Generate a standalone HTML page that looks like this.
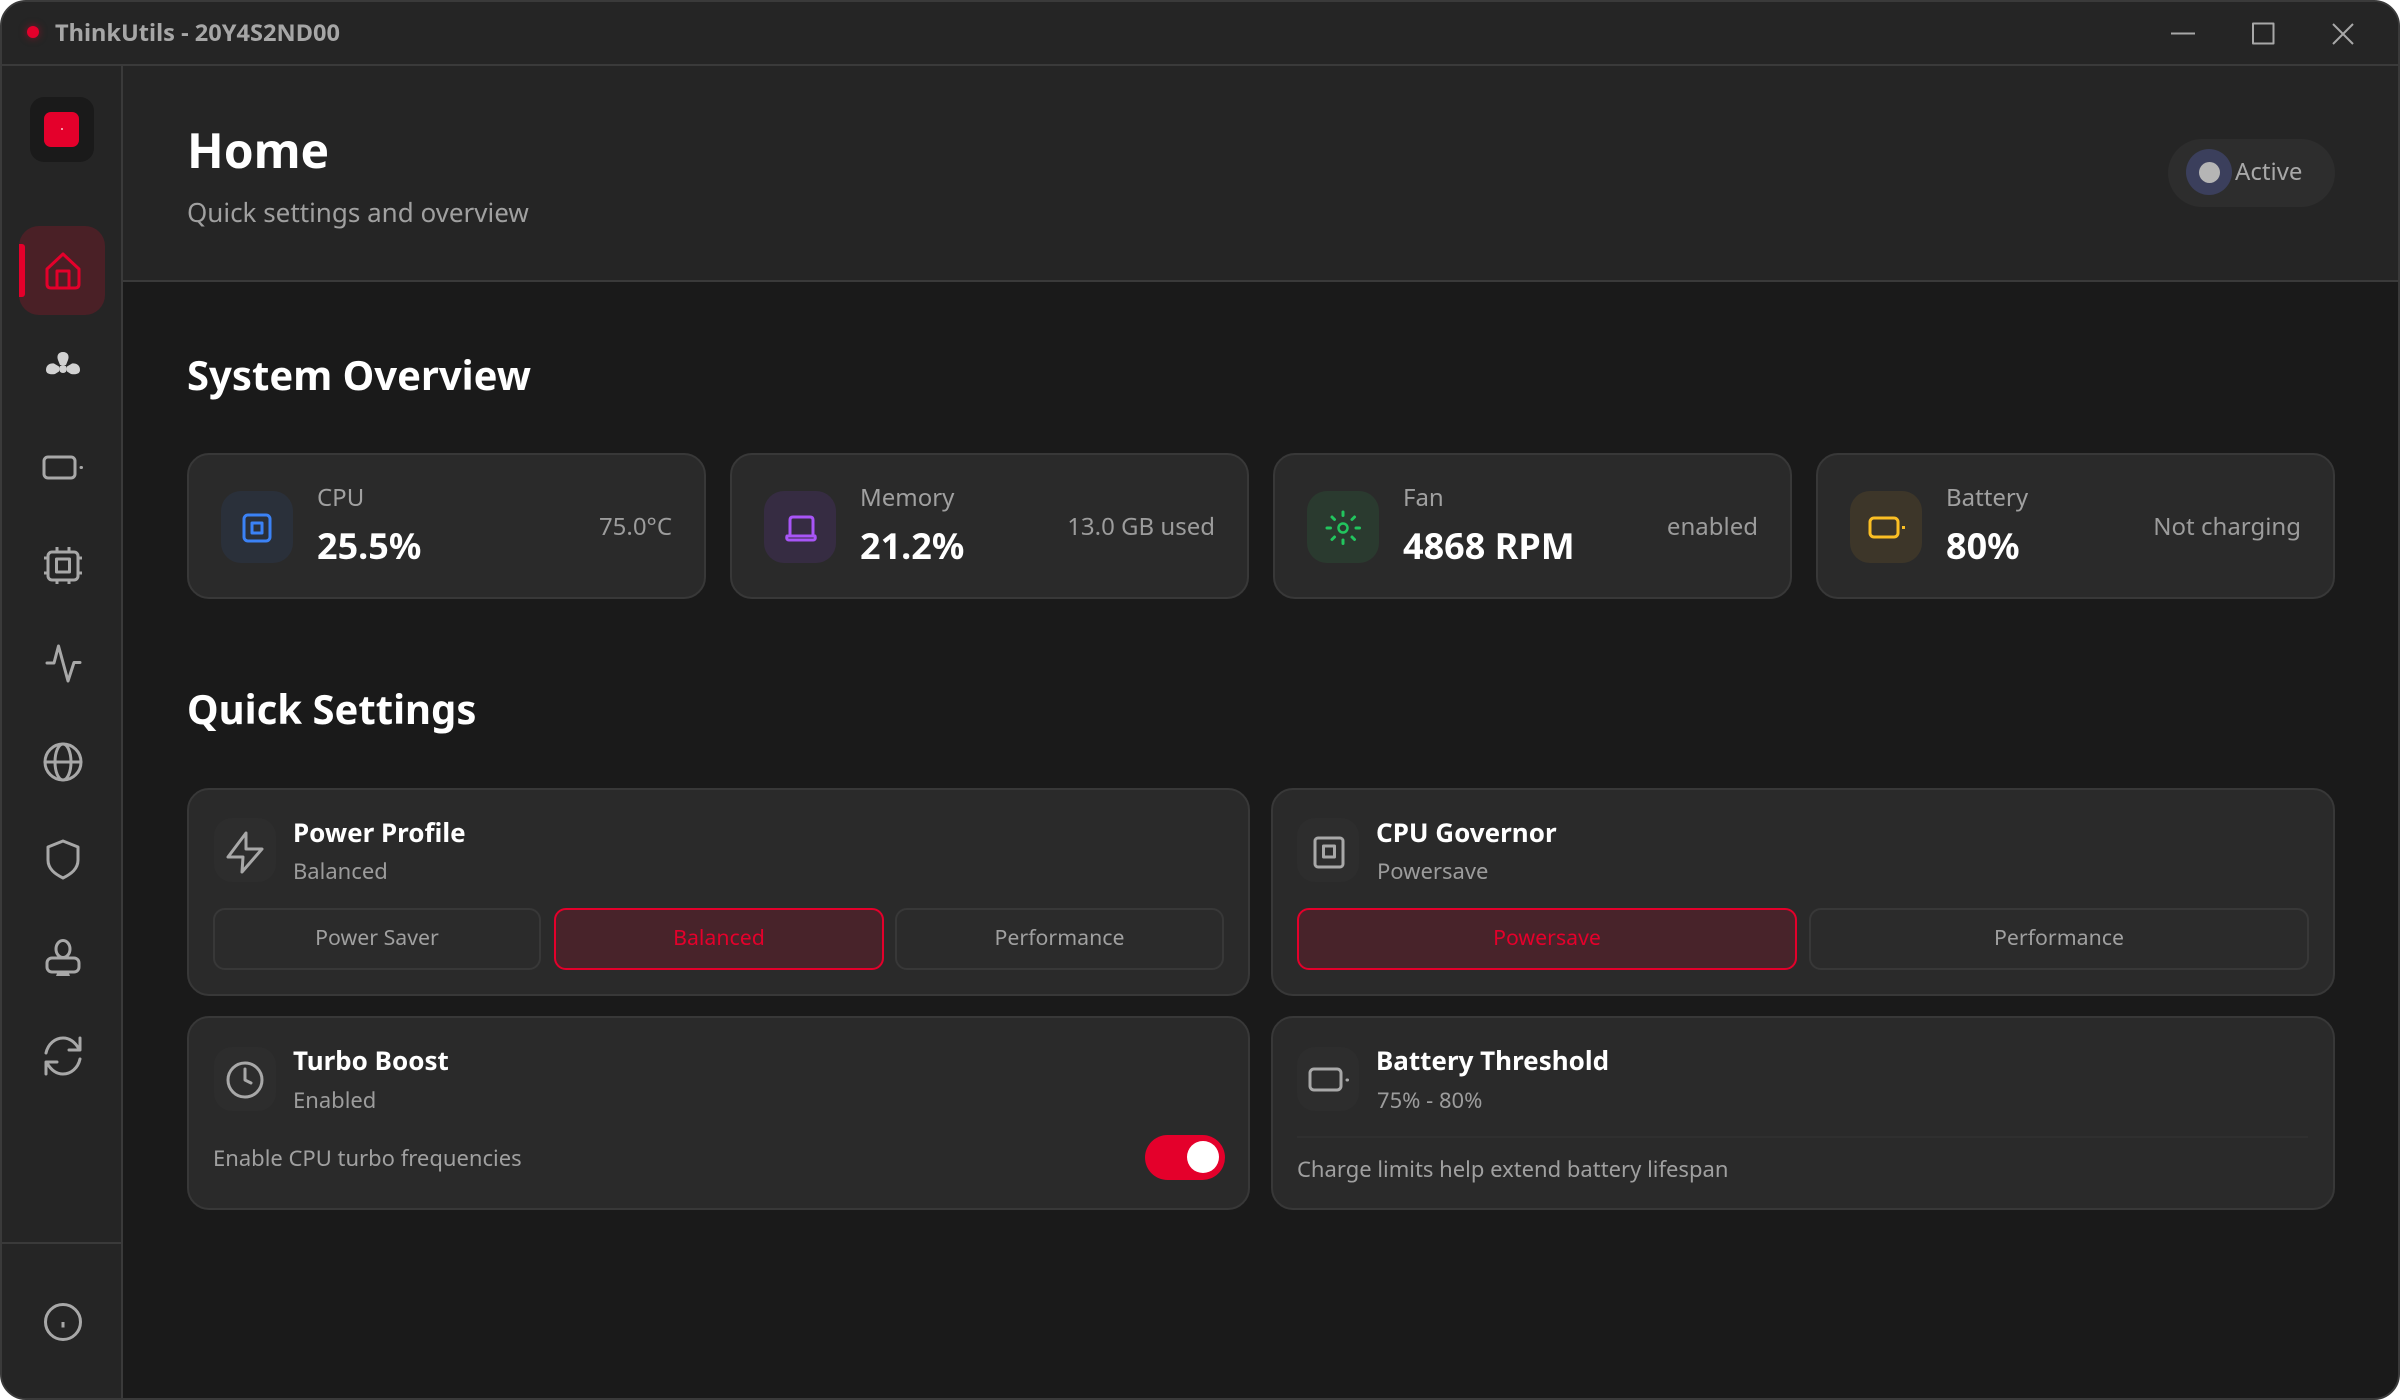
<!DOCTYPE html>
<html><head><meta charset="utf-8"><style>
*{margin:0;padding:0;box-sizing:border-box}
html,body{width:2400px;height:1400px;overflow:hidden;background:#fff}
body{font-family:"Noto Sans","Noto Sans CJK SC","Liberation Sans",sans-serif;position:relative}
.a{position:absolute}
.t{position:absolute;white-space:nowrap;line-height:40px;height:40px}
.card{position:absolute;background:#2a2a2a;border:2px solid #383838;border-radius:22px}
.ib{position:absolute;width:72px;height:72px;border-radius:20px}
.qb{position:absolute;width:62px;height:64px;border-radius:18px;background:#2d2d2d}
.btn{position:absolute;top:908px;height:62px;line-height:56px;text-align:center;border:2px solid #383838;border-radius:12px;font-size:21.3px;color:#a0a0a0;background:#2b2b2b}
.btn.on{background:#48232a;border-color:#e4002b;color:#e4002b}
.lab{font-size:24px;color:#a0a0a0}
.val{font-size:36px;font-weight:700;color:#fff}
.rt{font-size:24px;color:#9c9c9c;text-align:right}
.qt{font-size:26px;font-weight:700;color:#fff}
.qs{font-size:22px;color:#9c9c9c}
.h2{font-size:40px;font-weight:700;color:#fff}
</style></head><body>
<div class="a" style="left:0;top:0;width:2400px;height:1400px;border-radius:26px;background:#1a1a1a;border:2px solid #3a3a3a;overflow:hidden"></div>
<div class="a" style="left:2px;top:2px;width:2396px;height:63px;background:#252525;border-radius:24px 24px 0 0"></div>
<div class="a" style="left:2px;top:64px;width:2396px;height:2px;background:#3a3a3a"></div>
<div class="a" style="left:2px;top:66px;width:120px;height:1332px;background:#252525;border-radius:0 0 0 24px"></div>
<div class="a" style="left:121px;top:66px;width:2px;height:1332px;background:#3a3a3a"></div>
<div class="a" style="left:2px;top:1242px;width:119px;height:2px;background:#3a3a3a"></div>
<div class="a" style="left:123px;top:66px;width:2275px;height:214px;background:#252525"></div>
<div class="a" style="left:123px;top:280px;width:2275px;height:2px;background:#3a3a3a"></div>

<div class="a" style="left:27px;top:26px;width:12px;height:12px;border-radius:50%;background:#e4002b;box-shadow:0 0 8px rgba(228,0,43,.5)"></div>
<div class="t" style="left:55px;top:12px;font-size:23.6px;font-weight:700;color:#a6a6a6">ThinkUtils - 20Y4S2ND00</div>

<div class="a" style="left:30px;top:97px;width:64px;height:65px;border-radius:14px;background:#1a1a1a"></div>
<div class="a" style="left:44px;top:112px;width:35px;height:35px;border-radius:7px;background:#e4002b"></div>
<div class="a" style="left:61px;top:128px;width:2px;height:2px;background:#f59aa8"></div>
<div class="a" style="left:19px;top:226px;width:86px;height:89px;border-radius:20px;background:#4a2026"></div>
<div class="a" style="left:19px;top:244px;width:6px;height:53px;border-radius:0 3px 3px 0;background:#e4002b"></div>

<div class="t" style="left:187px;top:130.500px;font-size:48px;font-weight:700;color:#fff">Home</div>
<div class="t" style="left:187px;top:192px;font-size:26px;color:#a0a0a0">Quick settings and overview</div>
<div class="a" style="left:2168px;top:139px;width:167px;height:68px;border-radius:34px;background:#2d2d2d"></div>
<div class="a" style="left:2186px;top:149px;width:46px;height:46px;border-radius:50%;background:#3b3f5c"></div>
<div class="a" style="left:2199px;top:162px;width:21px;height:21px;border-radius:50%;background:#b5b5b5"></div>
<div class="t" style="left:2235px;top:152px;font-size:24px;color:#a8a8a8">Active</div>

<div class="t h2" style="left:187px;top:355px">System Overview</div>

<div class="card" style="left:187px;top:453px;width:519px;height:146px"></div>
<div class="card" style="left:730px;top:453px;width:519px;height:146px"></div>
<div class="card" style="left:1273px;top:453px;width:519px;height:146px"></div>
<div class="card" style="left:1816px;top:453px;width:519px;height:146px"></div>
<div class="ib" style="left:221px;top:491px;background:#2a303a"></div>
<div class="ib" style="left:764px;top:491px;background:#362c42"></div>
<div class="ib" style="left:1307px;top:491px;background:#2a3a2f"></div>
<div class="ib" style="left:1850px;top:491px;background:#3d3629"></div>

<div class="t lab" style="left:317px;top:478px">CPU</div>
<div class="t val" style="left:317px;top:526px">25.5%</div>
<div class="t rt" style="right:1728px;top:507px">75.0°C</div>
<div class="t lab" style="left:860px;top:478px">Memory</div>
<div class="t val" style="left:860px;top:526px">21.2%</div>
<div class="t rt" style="right:1185px;top:507px">13.0 GB used</div>
<div class="t lab" style="left:1403px;top:478px">Fan</div>
<div class="t val" style="left:1403px;top:526px">4868 RPM</div>
<div class="t rt" style="right:642px;top:507px">enabled</div>
<div class="t lab" style="left:1946px;top:478px">Battery</div>
<div class="t val" style="left:1946px;top:526px">80%</div>
<div class="t rt" style="right:99px;top:507px">Not charging</div>

<div class="t h2" style="left:187px;top:689px">Quick Settings</div>

<div class="card" style="left:187px;top:788px;width:1063px;height:208px"></div>
<div class="card" style="left:1271px;top:788px;width:1064px;height:208px"></div>
<div class="card" style="left:187px;top:1016px;width:1063px;height:194px"></div>
<div class="card" style="left:1271px;top:1016px;width:1064px;height:194px"></div>
<div class="qb" style="left:214px;top:818px"></div>
<div class="qb" style="left:1297px;top:818px"></div>
<div class="qb" style="left:214px;top:1047px"></div>
<div class="qb" style="left:1297px;top:1047px"></div>

<div class="t qt" style="left:293px;top:812px">Power Profile</div>
<div class="t qs" style="left:293px;top:851px">Balanced</div>
<div class="btn" style="left:213px;width:328px">Power Saver</div>
<div class="btn on" style="left:554px;width:330px">Balanced</div>
<div class="btn" style="left:895px;width:329px">Performance</div>

<div class="t qt" style="left:1376px;top:812px">CPU Governor</div>
<div class="t qs" style="left:1377px;top:851px">Powersave</div>
<div class="btn on" style="left:1297px;width:500px">Powersave</div>
<div class="btn" style="left:1809px;width:500px">Performance</div>

<div class="t qt" style="left:293px;top:1040px">Turbo Boost</div>
<div class="t qs" style="left:293px;top:1080px">Enabled</div>
<div class="t" style="left:213px;top:1138px;font-size:22px;color:#a0a0a0">Enable CPU turbo frequencies</div>
<div class="a" style="left:1145px;top:1135px;width:80px;height:45px;border-radius:23px;background:#e4002b"></div>
<div class="a" style="left:1187px;top:1141px;width:32px;height:32px;border-radius:50%;background:#fff"></div>

<div class="t qt" style="left:1376px;top:1040px">Battery Threshold</div>
<div class="t qs" style="left:1377px;top:1080px">75% - 80%</div>
<div class="a" style="left:1297px;top:1136px;width:1011px;height:2px;background:#2f2f2f"></div>
<div class="t" style="left:1297px;top:1149px;font-size:22px;color:#a0a0a0">Charge limits help extend battery lifespan</div>

<svg class="a" style="left:0;top:0" width="2400" height="1400" viewBox="0 0 2400 1400" fill="none" stroke-linecap="round" stroke-linejoin="round">
<g stroke="#a8a8a8" stroke-width="2" stroke-linecap="butt">
<path d="M2171 33.500H2195"/>
<rect x="2253" y="23.500" width="20.500" height="20"/>
<path d="M2333 24L2353 44M2353 24L2333 44"/>
</g>
<!-- home -->
<path d="M47 269L63 254L79 269V284Q79 288 75 288H51Q47 288 47 284ZM57 288V271H69V288" stroke="#e4002b" stroke-width="3"/>
<!-- fan -->
<g fill="#d2d2d2">
<path d="M63 352c-5 0-6.500 4-5 8l2 5h6l2-5c1.500-4 0-8-5-8z"/>
<path d="M46 370c0-5 4-7 8-6.500l5 3v5l-4 2.500c-5 1-9-.500-9-4z"/>
<path d="M80 370c0-5-4-7-8-6.500l-5 3v5l4 2.500c5 1 9-.500 9-4z"/>
<circle cx="63" cy="369" r="4"/>
</g>
<g stroke="#a8a8a8" stroke-width="3">
<rect x="44" y="457" width="31" height="21" rx="4"/>
<path d="M81 467.500h.5"/>
<!-- chip -->
<rect x="48" y="552" width="30" height="28" rx="4"/>
<rect x="56.500" y="559" width="13" height="13" stroke-linecap="butt"/>
<path d="M57 547v5M69 547v5M57 580v4M69 580v4M44 558h4M44 573h4M78 558h4M78 573h4" stroke-linecap="butt"/>
<!-- pulse -->
<path d="M47 663H54L58.500 646L68 681L74 662.500H80"/>
<!-- globe -->
<circle cx="63" cy="762" r="18"/>
<path d="M45 762H81"/>
<ellipse cx="63" cy="762" rx="8" ry="18"/>
<!-- shield -->
<path d="M63 841L78 847V860C78 869 71 874 63 878C55 874 48 869 48 860V847Z"/>
<!-- user -->
<ellipse cx="63" cy="949" rx="7" ry="8.500"/>
<rect x="47" y="958" width="32" height="14" rx="5"/>
<!-- refresh -->
<path d="M46 1053C48 1044 55 1038 63 1038C70 1038 75 1042 79 1049"/>
<path d="M80 1038V1050H69"/>
<path d="M80 1059C78 1068 71 1074 63 1074C56 1074 51 1070 47 1063"/>
<path d="M46 1074V1062H57"/>
<!-- info -->
<circle cx="63" cy="1322" r="17.500"/>
<path d="M63 1322v5.500" stroke-linecap="butt"/>
</g>
<path d="M58 971H68L70 976H56Z" fill="#a8a8a8"/>
<g stroke="#3b82f6" stroke-width="3"><rect x="244" y="515" width="26" height="26" rx="4"/><rect x="252" y="523" width="10" height="10" stroke-linecap="butt"/></g>
<g stroke="#a855f7" stroke-width="3"><path d="M790 536V520Q790 517 793 517H810Q813 517 813 520V536"/><path d="M787 536H815Q816 540 813 540H789Q786 540 787 536Z"/></g>
<g stroke="#22c55e"><circle cx="1343" cy="528" r="4.500" stroke-width="2.500"/>
<path d="M1343 512v3.500M1343 540v3.500M1327 528h3.500M1356 528h3.500M1332 517l2.500 2.500M1352 537l2.500 2.500M1354.500 517l-2.500 2.500M1334.500 537l-2.500 2.500" stroke-width="3"/></g>
<g stroke="#fbbf24" stroke-width="3"><rect x="1870" y="518" width="28" height="19" rx="4"/></g>
<rect x="1902" y="526" width="3" height="3" fill="#fbbf24"/>
<g stroke="#a8a8a8" stroke-width="3">
<path d="M246 833L228 857H243L242 872L262 849H246Z"/>
<rect x="1315" y="838" width="28" height="29" rx="3"/>
<rect x="1323.500" y="846" width="11" height="11"/>
<circle cx="245" cy="1080" r="17"/>
<path d="M245 1069V1080L251 1083"/>
<rect x="1310" y="1069" width="31" height="21" rx="4"/>
<path d="M1347 1080h.5"/>
</g>
</svg>
</body></html>
